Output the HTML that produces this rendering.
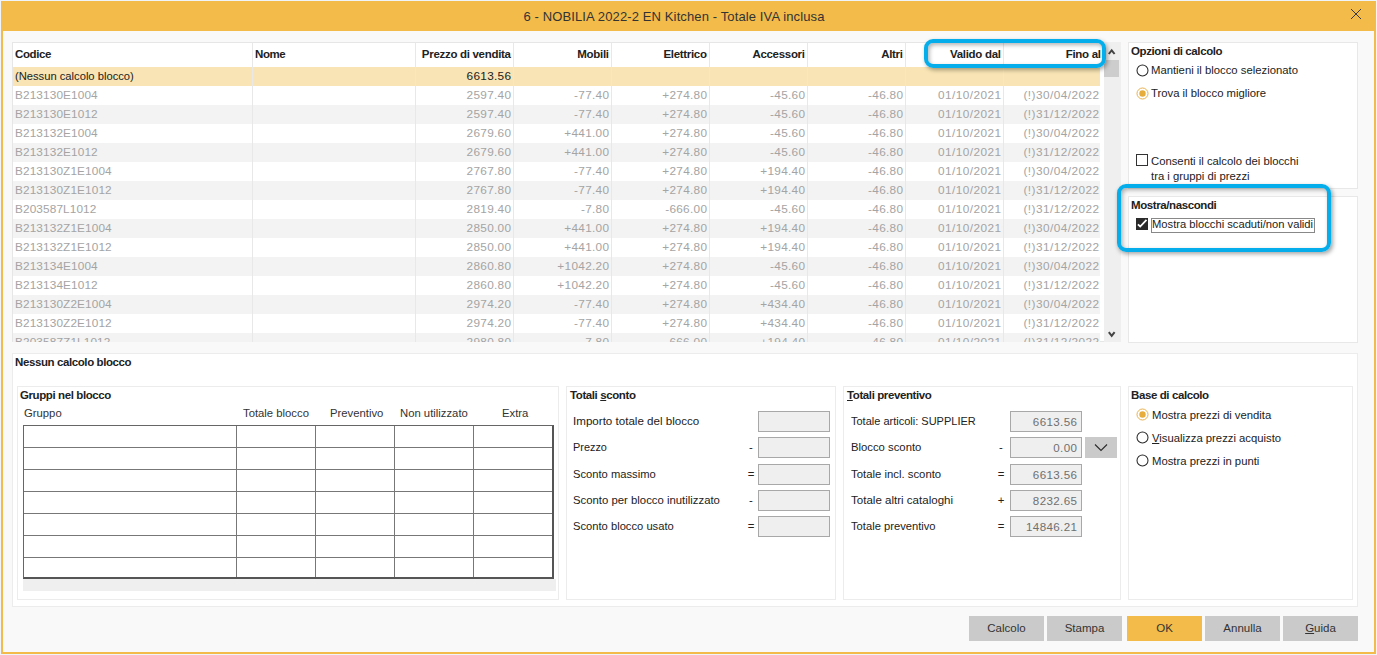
<!DOCTYPE html>
<html><head><meta charset="utf-8"><style>
html,body{margin:0;padding:0;width:1377px;height:655px;overflow:hidden;position:relative;font-family:"Liberation Sans", sans-serif;}
.b{position:absolute;}
.t{position:absolute;white-space:nowrap;}
u{text-decoration:underline;text-underline-offset:1px;}
</style></head><body>
<div class="b" style="left:0px;top:0px;width:1377px;height:655px;background:#eff3fa;"></div>
<div class="b" style="left:1px;top:1px;width:1375px;height:653px;background:#f2bb4a;"></div>
<div class="b" style="left:3px;top:31px;width:1371px;height:621px;background:#f9f9f9;"></div>
<div class="t" style="left:424.0px;width:500px;text-align:center;top:8.70px;font-size:13px;line-height:16px;color:#333;letter-spacing:0.12px;">6 - NOBILIA 2022-2 EN Kitchen - Totale IVA inclusa</div>
<svg class="b" style="left:1350px;top:8px" width="12" height="12" viewBox="0 0 12 12"><path d="M1 1L11 11M11 1L1 11" stroke="#3a3a3a" stroke-width="1" fill="none"/></svg>
<div class="b" style="left:12px;top:42px;width:1109px;height:300px;background:#fff;border:1px solid #e6e6e6;box-sizing:border-box;"></div>
<div class="b" style="left:13px;top:43px;width:1091px;height:299px;overflow:hidden;">
<div class="b" style="left:0px;top:24px;width:1087px;height:19px;background:#f8e4b4;"></div>
<div class="b" style="left:0px;top:62px;width:1087px;height:19px;background:#f3f3f3;"></div>
<div class="b" style="left:0px;top:100px;width:1087px;height:19px;background:#f3f3f3;"></div>
<div class="b" style="left:0px;top:138px;width:1087px;height:19px;background:#f3f3f3;"></div>
<div class="b" style="left:0px;top:176px;width:1087px;height:19px;background:#f3f3f3;"></div>
<div class="b" style="left:0px;top:214px;width:1087px;height:19px;background:#f3f3f3;"></div>
<div class="b" style="left:0px;top:252px;width:1087px;height:19px;background:#f3f3f3;"></div>
<div class="b" style="left:0px;top:290px;width:1087px;height:19px;background:#f3f3f3;"></div>
<div class="b" style="left:239px;top:0px;width:1px;height:300px;background:#e8e8e8;"></div>
<div class="b" style="left:402px;top:0px;width:1px;height:300px;background:#e8e8e8;"></div>
<div class="b" style="left:500px;top:0px;width:1px;height:300px;background:#e8e8e8;"></div>
<div class="b" style="left:598px;top:0px;width:1px;height:300px;background:#e8e8e8;"></div>
<div class="b" style="left:696px;top:0px;width:1px;height:300px;background:#e8e8e8;"></div>
<div class="b" style="left:794px;top:0px;width:1px;height:300px;background:#e8e8e8;"></div>
<div class="b" style="left:892px;top:0px;width:1px;height:300px;background:#e8e8e8;"></div>
<div class="b" style="left:990px;top:0px;width:1px;height:300px;background:#e8e8e8;"></div>
<div class="t" style="left:2px;top:3.20px;font-size:11.5px;line-height:16px;color:#222;font-weight:bold;letter-spacing:-0.4px;">Codice</div>
<div class="t" style="left:242px;top:3.20px;font-size:11.5px;line-height:16px;color:#222;font-weight:bold;letter-spacing:-0.4px;">Nome</div>
<div class="t" style="left:402.7px;width:95px;text-align:right;top:3.20px;font-size:11.5px;line-height:16px;color:#222;font-weight:bold;letter-spacing:-0.3px;">Prezzo di vendita</div>
<div class="t" style="left:500.70000000000005px;width:95px;text-align:right;top:3.20px;font-size:11.5px;line-height:16px;color:#222;font-weight:bold;letter-spacing:-0.3px;">Mobili</div>
<div class="t" style="left:598.7px;width:95px;text-align:right;top:3.20px;font-size:11.5px;line-height:16px;color:#222;font-weight:bold;letter-spacing:-0.3px;">Elettrico</div>
<div class="t" style="left:696.7px;width:95px;text-align:right;top:3.20px;font-size:11.5px;line-height:16px;color:#222;font-weight:bold;letter-spacing:-0.3px;">Accessori</div>
<div class="t" style="left:794.7px;width:95px;text-align:right;top:3.20px;font-size:11.5px;line-height:16px;color:#222;font-weight:bold;letter-spacing:-0.3px;">Altri</div>
<div class="t" style="left:892.7px;width:95px;text-align:right;top:3.20px;font-size:11.5px;line-height:16px;color:#222;font-weight:bold;letter-spacing:-0.3px;">Valido dal</div>
<div class="t" style="left:992.7px;width:95px;text-align:right;top:3.20px;font-size:11.5px;line-height:16px;color:#222;font-weight:bold;letter-spacing:-0.3px;">Fino al</div>
<div class="t" style="left:2px;top:25.30px;font-size:11.2px;line-height:16px;color:#222;">(Nessun calcolo blocco)</div>
<div class="t" style="left:403.3px;width:95px;text-align:right;top:25.10px;font-size:11.8px;line-height:16px;color:#222;letter-spacing:0.3px;">6613.56</div>
<div class="t" style="left:2px;top:44.10px;font-size:11.8px;line-height:16px;color:#a4a4a4;letter-spacing:0.12px;">B213130E1004</div>
<div class="t" style="left:403.3px;width:95px;text-align:right;top:44.10px;font-size:11.8px;line-height:16px;color:#a4a4a4;letter-spacing:0.3px;">2597.40</div>
<div class="t" style="left:501.29999999999995px;width:95px;text-align:right;top:44.10px;font-size:11.8px;line-height:16px;color:#a4a4a4;letter-spacing:0.3px;">-77.40</div>
<div class="t" style="left:599.3px;width:95px;text-align:right;top:44.10px;font-size:11.8px;line-height:16px;color:#a4a4a4;letter-spacing:0.3px;">+274.80</div>
<div class="t" style="left:697.3px;width:95px;text-align:right;top:44.10px;font-size:11.8px;line-height:16px;color:#a4a4a4;letter-spacing:0.3px;">-45.60</div>
<div class="t" style="left:795.3px;width:95px;text-align:right;top:44.10px;font-size:11.8px;line-height:16px;color:#a4a4a4;letter-spacing:0.3px;">-46.80</div>
<div class="t" style="left:893.45px;width:95px;text-align:right;top:44.10px;font-size:11.8px;line-height:16px;color:#a4a4a4;letter-spacing:0.45px;">01/10/2021</div>
<div class="t" style="left:991.45px;width:95px;text-align:right;top:44.10px;font-size:11.8px;line-height:16px;color:#a4a4a4;letter-spacing:0.45px;">(!)30/04/2022</div>
<div class="t" style="left:2px;top:63.10px;font-size:11.8px;line-height:16px;color:#a4a4a4;letter-spacing:0.12px;">B213130E1012</div>
<div class="t" style="left:403.3px;width:95px;text-align:right;top:63.10px;font-size:11.8px;line-height:16px;color:#a4a4a4;letter-spacing:0.3px;">2597.40</div>
<div class="t" style="left:501.29999999999995px;width:95px;text-align:right;top:63.10px;font-size:11.8px;line-height:16px;color:#a4a4a4;letter-spacing:0.3px;">-77.40</div>
<div class="t" style="left:599.3px;width:95px;text-align:right;top:63.10px;font-size:11.8px;line-height:16px;color:#a4a4a4;letter-spacing:0.3px;">+274.80</div>
<div class="t" style="left:697.3px;width:95px;text-align:right;top:63.10px;font-size:11.8px;line-height:16px;color:#a4a4a4;letter-spacing:0.3px;">-45.60</div>
<div class="t" style="left:795.3px;width:95px;text-align:right;top:63.10px;font-size:11.8px;line-height:16px;color:#a4a4a4;letter-spacing:0.3px;">-46.80</div>
<div class="t" style="left:893.45px;width:95px;text-align:right;top:63.10px;font-size:11.8px;line-height:16px;color:#a4a4a4;letter-spacing:0.45px;">01/10/2021</div>
<div class="t" style="left:991.45px;width:95px;text-align:right;top:63.10px;font-size:11.8px;line-height:16px;color:#a4a4a4;letter-spacing:0.45px;">(!)31/12/2022</div>
<div class="t" style="left:2px;top:82.10px;font-size:11.8px;line-height:16px;color:#a4a4a4;letter-spacing:0.12px;">B213132E1004</div>
<div class="t" style="left:403.3px;width:95px;text-align:right;top:82.10px;font-size:11.8px;line-height:16px;color:#a4a4a4;letter-spacing:0.3px;">2679.60</div>
<div class="t" style="left:501.29999999999995px;width:95px;text-align:right;top:82.10px;font-size:11.8px;line-height:16px;color:#a4a4a4;letter-spacing:0.3px;">+441.00</div>
<div class="t" style="left:599.3px;width:95px;text-align:right;top:82.10px;font-size:11.8px;line-height:16px;color:#a4a4a4;letter-spacing:0.3px;">+274.80</div>
<div class="t" style="left:697.3px;width:95px;text-align:right;top:82.10px;font-size:11.8px;line-height:16px;color:#a4a4a4;letter-spacing:0.3px;">-45.60</div>
<div class="t" style="left:795.3px;width:95px;text-align:right;top:82.10px;font-size:11.8px;line-height:16px;color:#a4a4a4;letter-spacing:0.3px;">-46.80</div>
<div class="t" style="left:893.45px;width:95px;text-align:right;top:82.10px;font-size:11.8px;line-height:16px;color:#a4a4a4;letter-spacing:0.45px;">01/10/2021</div>
<div class="t" style="left:991.45px;width:95px;text-align:right;top:82.10px;font-size:11.8px;line-height:16px;color:#a4a4a4;letter-spacing:0.45px;">(!)30/04/2022</div>
<div class="t" style="left:2px;top:101.10px;font-size:11.8px;line-height:16px;color:#a4a4a4;letter-spacing:0.12px;">B213132E1012</div>
<div class="t" style="left:403.3px;width:95px;text-align:right;top:101.10px;font-size:11.8px;line-height:16px;color:#a4a4a4;letter-spacing:0.3px;">2679.60</div>
<div class="t" style="left:501.29999999999995px;width:95px;text-align:right;top:101.10px;font-size:11.8px;line-height:16px;color:#a4a4a4;letter-spacing:0.3px;">+441.00</div>
<div class="t" style="left:599.3px;width:95px;text-align:right;top:101.10px;font-size:11.8px;line-height:16px;color:#a4a4a4;letter-spacing:0.3px;">+274.80</div>
<div class="t" style="left:697.3px;width:95px;text-align:right;top:101.10px;font-size:11.8px;line-height:16px;color:#a4a4a4;letter-spacing:0.3px;">-45.60</div>
<div class="t" style="left:795.3px;width:95px;text-align:right;top:101.10px;font-size:11.8px;line-height:16px;color:#a4a4a4;letter-spacing:0.3px;">-46.80</div>
<div class="t" style="left:893.45px;width:95px;text-align:right;top:101.10px;font-size:11.8px;line-height:16px;color:#a4a4a4;letter-spacing:0.45px;">01/10/2021</div>
<div class="t" style="left:991.45px;width:95px;text-align:right;top:101.10px;font-size:11.8px;line-height:16px;color:#a4a4a4;letter-spacing:0.45px;">(!)31/12/2022</div>
<div class="t" style="left:2px;top:120.10px;font-size:11.8px;line-height:16px;color:#a4a4a4;letter-spacing:0.12px;">B213130Z1E1004</div>
<div class="t" style="left:403.3px;width:95px;text-align:right;top:120.10px;font-size:11.8px;line-height:16px;color:#a4a4a4;letter-spacing:0.3px;">2767.80</div>
<div class="t" style="left:501.29999999999995px;width:95px;text-align:right;top:120.10px;font-size:11.8px;line-height:16px;color:#a4a4a4;letter-spacing:0.3px;">-77.40</div>
<div class="t" style="left:599.3px;width:95px;text-align:right;top:120.10px;font-size:11.8px;line-height:16px;color:#a4a4a4;letter-spacing:0.3px;">+274.80</div>
<div class="t" style="left:697.3px;width:95px;text-align:right;top:120.10px;font-size:11.8px;line-height:16px;color:#a4a4a4;letter-spacing:0.3px;">+194.40</div>
<div class="t" style="left:795.3px;width:95px;text-align:right;top:120.10px;font-size:11.8px;line-height:16px;color:#a4a4a4;letter-spacing:0.3px;">-46.80</div>
<div class="t" style="left:893.45px;width:95px;text-align:right;top:120.10px;font-size:11.8px;line-height:16px;color:#a4a4a4;letter-spacing:0.45px;">01/10/2021</div>
<div class="t" style="left:991.45px;width:95px;text-align:right;top:120.10px;font-size:11.8px;line-height:16px;color:#a4a4a4;letter-spacing:0.45px;">(!)30/04/2022</div>
<div class="t" style="left:2px;top:139.10px;font-size:11.8px;line-height:16px;color:#a4a4a4;letter-spacing:0.12px;">B213130Z1E1012</div>
<div class="t" style="left:403.3px;width:95px;text-align:right;top:139.10px;font-size:11.8px;line-height:16px;color:#a4a4a4;letter-spacing:0.3px;">2767.80</div>
<div class="t" style="left:501.29999999999995px;width:95px;text-align:right;top:139.10px;font-size:11.8px;line-height:16px;color:#a4a4a4;letter-spacing:0.3px;">-77.40</div>
<div class="t" style="left:599.3px;width:95px;text-align:right;top:139.10px;font-size:11.8px;line-height:16px;color:#a4a4a4;letter-spacing:0.3px;">+274.80</div>
<div class="t" style="left:697.3px;width:95px;text-align:right;top:139.10px;font-size:11.8px;line-height:16px;color:#a4a4a4;letter-spacing:0.3px;">+194.40</div>
<div class="t" style="left:795.3px;width:95px;text-align:right;top:139.10px;font-size:11.8px;line-height:16px;color:#a4a4a4;letter-spacing:0.3px;">-46.80</div>
<div class="t" style="left:893.45px;width:95px;text-align:right;top:139.10px;font-size:11.8px;line-height:16px;color:#a4a4a4;letter-spacing:0.45px;">01/10/2021</div>
<div class="t" style="left:991.45px;width:95px;text-align:right;top:139.10px;font-size:11.8px;line-height:16px;color:#a4a4a4;letter-spacing:0.45px;">(!)31/12/2022</div>
<div class="t" style="left:2px;top:158.10px;font-size:11.8px;line-height:16px;color:#a4a4a4;letter-spacing:0.12px;">B203587L1012</div>
<div class="t" style="left:403.3px;width:95px;text-align:right;top:158.10px;font-size:11.8px;line-height:16px;color:#a4a4a4;letter-spacing:0.3px;">2819.40</div>
<div class="t" style="left:501.29999999999995px;width:95px;text-align:right;top:158.10px;font-size:11.8px;line-height:16px;color:#a4a4a4;letter-spacing:0.3px;">-7.80</div>
<div class="t" style="left:599.3px;width:95px;text-align:right;top:158.10px;font-size:11.8px;line-height:16px;color:#a4a4a4;letter-spacing:0.3px;">-666.00</div>
<div class="t" style="left:697.3px;width:95px;text-align:right;top:158.10px;font-size:11.8px;line-height:16px;color:#a4a4a4;letter-spacing:0.3px;">-45.60</div>
<div class="t" style="left:795.3px;width:95px;text-align:right;top:158.10px;font-size:11.8px;line-height:16px;color:#a4a4a4;letter-spacing:0.3px;">-46.80</div>
<div class="t" style="left:893.45px;width:95px;text-align:right;top:158.10px;font-size:11.8px;line-height:16px;color:#a4a4a4;letter-spacing:0.45px;">01/10/2021</div>
<div class="t" style="left:991.45px;width:95px;text-align:right;top:158.10px;font-size:11.8px;line-height:16px;color:#a4a4a4;letter-spacing:0.45px;">(!)31/12/2022</div>
<div class="t" style="left:2px;top:177.10px;font-size:11.8px;line-height:16px;color:#a4a4a4;letter-spacing:0.12px;">B213132Z1E1004</div>
<div class="t" style="left:403.3px;width:95px;text-align:right;top:177.10px;font-size:11.8px;line-height:16px;color:#a4a4a4;letter-spacing:0.3px;">2850.00</div>
<div class="t" style="left:501.29999999999995px;width:95px;text-align:right;top:177.10px;font-size:11.8px;line-height:16px;color:#a4a4a4;letter-spacing:0.3px;">+441.00</div>
<div class="t" style="left:599.3px;width:95px;text-align:right;top:177.10px;font-size:11.8px;line-height:16px;color:#a4a4a4;letter-spacing:0.3px;">+274.80</div>
<div class="t" style="left:697.3px;width:95px;text-align:right;top:177.10px;font-size:11.8px;line-height:16px;color:#a4a4a4;letter-spacing:0.3px;">+194.40</div>
<div class="t" style="left:795.3px;width:95px;text-align:right;top:177.10px;font-size:11.8px;line-height:16px;color:#a4a4a4;letter-spacing:0.3px;">-46.80</div>
<div class="t" style="left:893.45px;width:95px;text-align:right;top:177.10px;font-size:11.8px;line-height:16px;color:#a4a4a4;letter-spacing:0.45px;">01/10/2021</div>
<div class="t" style="left:991.45px;width:95px;text-align:right;top:177.10px;font-size:11.8px;line-height:16px;color:#a4a4a4;letter-spacing:0.45px;">(!)30/04/2022</div>
<div class="t" style="left:2px;top:196.10px;font-size:11.8px;line-height:16px;color:#a4a4a4;letter-spacing:0.12px;">B213132Z1E1012</div>
<div class="t" style="left:403.3px;width:95px;text-align:right;top:196.10px;font-size:11.8px;line-height:16px;color:#a4a4a4;letter-spacing:0.3px;">2850.00</div>
<div class="t" style="left:501.29999999999995px;width:95px;text-align:right;top:196.10px;font-size:11.8px;line-height:16px;color:#a4a4a4;letter-spacing:0.3px;">+441.00</div>
<div class="t" style="left:599.3px;width:95px;text-align:right;top:196.10px;font-size:11.8px;line-height:16px;color:#a4a4a4;letter-spacing:0.3px;">+274.80</div>
<div class="t" style="left:697.3px;width:95px;text-align:right;top:196.10px;font-size:11.8px;line-height:16px;color:#a4a4a4;letter-spacing:0.3px;">+194.40</div>
<div class="t" style="left:795.3px;width:95px;text-align:right;top:196.10px;font-size:11.8px;line-height:16px;color:#a4a4a4;letter-spacing:0.3px;">-46.80</div>
<div class="t" style="left:893.45px;width:95px;text-align:right;top:196.10px;font-size:11.8px;line-height:16px;color:#a4a4a4;letter-spacing:0.45px;">01/10/2021</div>
<div class="t" style="left:991.45px;width:95px;text-align:right;top:196.10px;font-size:11.8px;line-height:16px;color:#a4a4a4;letter-spacing:0.45px;">(!)31/12/2022</div>
<div class="t" style="left:2px;top:215.10px;font-size:11.8px;line-height:16px;color:#a4a4a4;letter-spacing:0.12px;">B213134E1004</div>
<div class="t" style="left:403.3px;width:95px;text-align:right;top:215.10px;font-size:11.8px;line-height:16px;color:#a4a4a4;letter-spacing:0.3px;">2860.80</div>
<div class="t" style="left:501.29999999999995px;width:95px;text-align:right;top:215.10px;font-size:11.8px;line-height:16px;color:#a4a4a4;letter-spacing:0.3px;">+1042.20</div>
<div class="t" style="left:599.3px;width:95px;text-align:right;top:215.10px;font-size:11.8px;line-height:16px;color:#a4a4a4;letter-spacing:0.3px;">+274.80</div>
<div class="t" style="left:697.3px;width:95px;text-align:right;top:215.10px;font-size:11.8px;line-height:16px;color:#a4a4a4;letter-spacing:0.3px;">-45.60</div>
<div class="t" style="left:795.3px;width:95px;text-align:right;top:215.10px;font-size:11.8px;line-height:16px;color:#a4a4a4;letter-spacing:0.3px;">-46.80</div>
<div class="t" style="left:893.45px;width:95px;text-align:right;top:215.10px;font-size:11.8px;line-height:16px;color:#a4a4a4;letter-spacing:0.45px;">01/10/2021</div>
<div class="t" style="left:991.45px;width:95px;text-align:right;top:215.10px;font-size:11.8px;line-height:16px;color:#a4a4a4;letter-spacing:0.45px;">(!)30/04/2022</div>
<div class="t" style="left:2px;top:234.10px;font-size:11.8px;line-height:16px;color:#a4a4a4;letter-spacing:0.12px;">B213134E1012</div>
<div class="t" style="left:403.3px;width:95px;text-align:right;top:234.10px;font-size:11.8px;line-height:16px;color:#a4a4a4;letter-spacing:0.3px;">2860.80</div>
<div class="t" style="left:501.29999999999995px;width:95px;text-align:right;top:234.10px;font-size:11.8px;line-height:16px;color:#a4a4a4;letter-spacing:0.3px;">+1042.20</div>
<div class="t" style="left:599.3px;width:95px;text-align:right;top:234.10px;font-size:11.8px;line-height:16px;color:#a4a4a4;letter-spacing:0.3px;">+274.80</div>
<div class="t" style="left:697.3px;width:95px;text-align:right;top:234.10px;font-size:11.8px;line-height:16px;color:#a4a4a4;letter-spacing:0.3px;">-45.60</div>
<div class="t" style="left:795.3px;width:95px;text-align:right;top:234.10px;font-size:11.8px;line-height:16px;color:#a4a4a4;letter-spacing:0.3px;">-46.80</div>
<div class="t" style="left:893.45px;width:95px;text-align:right;top:234.10px;font-size:11.8px;line-height:16px;color:#a4a4a4;letter-spacing:0.45px;">01/10/2021</div>
<div class="t" style="left:991.45px;width:95px;text-align:right;top:234.10px;font-size:11.8px;line-height:16px;color:#a4a4a4;letter-spacing:0.45px;">(!)31/12/2022</div>
<div class="t" style="left:2px;top:253.10px;font-size:11.8px;line-height:16px;color:#a4a4a4;letter-spacing:0.12px;">B213130Z2E1004</div>
<div class="t" style="left:403.3px;width:95px;text-align:right;top:253.10px;font-size:11.8px;line-height:16px;color:#a4a4a4;letter-spacing:0.3px;">2974.20</div>
<div class="t" style="left:501.29999999999995px;width:95px;text-align:right;top:253.10px;font-size:11.8px;line-height:16px;color:#a4a4a4;letter-spacing:0.3px;">-77.40</div>
<div class="t" style="left:599.3px;width:95px;text-align:right;top:253.10px;font-size:11.8px;line-height:16px;color:#a4a4a4;letter-spacing:0.3px;">+274.80</div>
<div class="t" style="left:697.3px;width:95px;text-align:right;top:253.10px;font-size:11.8px;line-height:16px;color:#a4a4a4;letter-spacing:0.3px;">+434.40</div>
<div class="t" style="left:795.3px;width:95px;text-align:right;top:253.10px;font-size:11.8px;line-height:16px;color:#a4a4a4;letter-spacing:0.3px;">-46.80</div>
<div class="t" style="left:893.45px;width:95px;text-align:right;top:253.10px;font-size:11.8px;line-height:16px;color:#a4a4a4;letter-spacing:0.45px;">01/10/2021</div>
<div class="t" style="left:991.45px;width:95px;text-align:right;top:253.10px;font-size:11.8px;line-height:16px;color:#a4a4a4;letter-spacing:0.45px;">(!)30/04/2022</div>
<div class="t" style="left:2px;top:272.10px;font-size:11.8px;line-height:16px;color:#a4a4a4;letter-spacing:0.12px;">B213130Z2E1012</div>
<div class="t" style="left:403.3px;width:95px;text-align:right;top:272.10px;font-size:11.8px;line-height:16px;color:#a4a4a4;letter-spacing:0.3px;">2974.20</div>
<div class="t" style="left:501.29999999999995px;width:95px;text-align:right;top:272.10px;font-size:11.8px;line-height:16px;color:#a4a4a4;letter-spacing:0.3px;">-77.40</div>
<div class="t" style="left:599.3px;width:95px;text-align:right;top:272.10px;font-size:11.8px;line-height:16px;color:#a4a4a4;letter-spacing:0.3px;">+274.80</div>
<div class="t" style="left:697.3px;width:95px;text-align:right;top:272.10px;font-size:11.8px;line-height:16px;color:#a4a4a4;letter-spacing:0.3px;">+434.40</div>
<div class="t" style="left:795.3px;width:95px;text-align:right;top:272.10px;font-size:11.8px;line-height:16px;color:#a4a4a4;letter-spacing:0.3px;">-46.80</div>
<div class="t" style="left:893.45px;width:95px;text-align:right;top:272.10px;font-size:11.8px;line-height:16px;color:#a4a4a4;letter-spacing:0.45px;">01/10/2021</div>
<div class="t" style="left:991.45px;width:95px;text-align:right;top:272.10px;font-size:11.8px;line-height:16px;color:#a4a4a4;letter-spacing:0.45px;">(!)31/12/2022</div>
<div class="t" style="left:2px;top:291.10px;font-size:11.8px;line-height:16px;color:#a4a4a4;letter-spacing:0.12px;">B203587Z1L1012</div>
<div class="t" style="left:403.3px;width:95px;text-align:right;top:291.10px;font-size:11.8px;line-height:16px;color:#a4a4a4;letter-spacing:0.3px;">2980.80</div>
<div class="t" style="left:501.29999999999995px;width:95px;text-align:right;top:291.10px;font-size:11.8px;line-height:16px;color:#a4a4a4;letter-spacing:0.3px;">-7.80</div>
<div class="t" style="left:599.3px;width:95px;text-align:right;top:291.10px;font-size:11.8px;line-height:16px;color:#a4a4a4;letter-spacing:0.3px;">-666.00</div>
<div class="t" style="left:697.3px;width:95px;text-align:right;top:291.10px;font-size:11.8px;line-height:16px;color:#a4a4a4;letter-spacing:0.3px;">+194.40</div>
<div class="t" style="left:795.3px;width:95px;text-align:right;top:291.10px;font-size:11.8px;line-height:16px;color:#a4a4a4;letter-spacing:0.3px;">-46.80</div>
<div class="t" style="left:893.45px;width:95px;text-align:right;top:291.10px;font-size:11.8px;line-height:16px;color:#a4a4a4;letter-spacing:0.45px;">01/10/2021</div>
<div class="t" style="left:991.45px;width:95px;text-align:right;top:291.10px;font-size:11.8px;line-height:16px;color:#a4a4a4;letter-spacing:0.45px;">(!)31/12/2022</div>
</div>
<div class="b" style="left:1104px;top:42px;width:17px;height:300px;background:#efefef;"></div>
<div class="b" style="left:1104px;top:60px;width:15px;height:17px;background:#cdcdcd;"></div>
<svg class="b" style="left:1106px;top:47px" width="11" height="10" viewBox="0 0 11 10"><path d="M2.8 7L5.7 3.3L8.6 7" stroke="#444" stroke-width="2" fill="none"/></svg>
<svg class="b" style="left:1106px;top:328.5px" width="11" height="10" viewBox="0 0 11 10"><path d="M2.8 3.2L5.7 6.9L8.6 3.2" stroke="#444" stroke-width="2" fill="none"/></svg>
<div class="b" style="left:1128px;top:42px;width:230px;height:147px;background:#fff;border:1px solid #e8e8e8;box-sizing:border-box;"></div>
<div class="t" style="left:1131px;top:43.20px;font-size:11.5px;line-height:16px;color:#222;font-weight:bold;letter-spacing:-0.4px;">Opzioni di calcolo</div>
<svg class="b" style="left:1135.7px;top:63.5px" width="13" height="13" viewBox="0 0 13 13"><circle cx="6.5" cy="6.5" r="5.5" fill="#fff" stroke="#2a2a2a" stroke-width="1.05"/></svg>
<div class="t" style="left:1151px;top:62.27px;font-size:11.3px;line-height:16px;color:#222;">Mantieni il blocco selezionato</div>
<svg class="b" style="left:1135.7px;top:86.5px" width="13" height="13" viewBox="0 0 13 13"><circle cx="6.5" cy="6.5" r="5.5" fill="#fff" stroke="#eab14a" stroke-width="1"/><circle cx="6.5" cy="6.5" r="3.2" fill="#e6ad3c"/></svg>
<div class="t" style="left:1151px;top:85.27px;font-size:11.3px;line-height:16px;color:#222;">Trova il blocco migliore</div>
<div class="b" style="left:1136px;top:154px;width:12px;height:12px;border:1px solid #333;background:#fff;box-sizing:border-box;"></div>
<div class="t" style="left:1151px;top:153.27px;font-size:11.3px;line-height:16px;color:#222;">Consenti il calcolo dei blocchi</div>
<div class="t" style="left:1151px;top:168.27px;font-size:11.3px;line-height:16px;color:#222;">tra i gruppi di prezzi</div>
<div class="b" style="left:1128px;top:196px;width:230px;height:147px;background:#fff;border:1px solid #e8e8e8;box-sizing:border-box;"></div>
<div class="t" style="left:1131px;top:197.20px;font-size:11.5px;line-height:16px;color:#222;font-weight:bold;letter-spacing:-0.4px;">Mostra/nascondi</div>
<div class="b" style="left:1136px;top:218px;width:12px;height:12px;background:#2b2b2b;"></div>
<svg class="b" style="left:1136px;top:218px" width="12" height="12" viewBox="0 0 12 12"><path d="M1.9 6.4L4.2 8.5L10.5 1.8" stroke="#fff" stroke-width="1.8" fill="none"/></svg>
<div class="b" style="left:1151px;top:218px;width:164px;height:15px;border:1px solid #888;box-sizing:border-box;"></div>
<div class="t" style="left:1152px;top:216.30px;font-size:11.2px;line-height:16px;color:#222;">Mostra blocchi scaduti/non validi</div>
<div class="b" style="left:12px;top:353px;width:1346px;height:254px;background:#fff;border:1px solid #ececec;box-sizing:border-box;"></div>
<div class="t" style="left:15px;top:354.20px;font-size:11.5px;line-height:16px;color:#222;font-weight:bold;letter-spacing:-0.4px;">Nessun calcolo blocco</div>
<div class="b" style="left:17px;top:386px;width:542px;height:214px;background:#fff;border:1px solid #ececec;box-sizing:border-box;"></div>
<div class="t" style="left:20px;top:387.20px;font-size:11.5px;line-height:16px;color:#222;font-weight:bold;letter-spacing:-0.4px;">Gruppi nel blocco</div>
<div class="t" style="left:24px;top:405.27px;font-size:11.3px;line-height:16px;color:#333;">Gruppo</div>
<div class="t" style="left:243px;top:405.27px;font-size:11.3px;line-height:16px;color:#333;">Totale blocco</div>
<div class="t" style="left:330px;top:405.27px;font-size:11.3px;line-height:16px;color:#333;">Preventivo</div>
<div class="t" style="left:400px;top:405.27px;font-size:11.3px;line-height:16px;color:#333;">Non utilizzato</div>
<div class="t" style="left:502px;top:405.27px;font-size:11.3px;line-height:16px;color:#333;">Extra</div>
<div class="b" style="left:23px;top:425px;width:531px;height:154px;border:1px solid #666;border-right:2px solid #555;border-bottom:2px solid #555;box-sizing:border-box;background:#fff;"></div>
<div class="b" style="left:24px;top:447px;width:528px;height:1px;background:#777;"></div>
<div class="b" style="left:24px;top:469px;width:528px;height:1px;background:#777;"></div>
<div class="b" style="left:24px;top:491px;width:528px;height:1px;background:#777;"></div>
<div class="b" style="left:24px;top:513px;width:528px;height:1px;background:#777;"></div>
<div class="b" style="left:24px;top:535px;width:528px;height:1px;background:#777;"></div>
<div class="b" style="left:24px;top:557px;width:528px;height:1px;background:#777;"></div>
<div class="b" style="left:236px;top:426px;width:1px;height:151px;background:#777;"></div>
<div class="b" style="left:315px;top:426px;width:1px;height:151px;background:#777;"></div>
<div class="b" style="left:394px;top:426px;width:1px;height:151px;background:#777;"></div>
<div class="b" style="left:473px;top:426px;width:1px;height:151px;background:#777;"></div>
<div class="b" style="left:23px;top:579px;width:533px;height:12px;background:#efefef;"></div>
<div class="b" style="left:566px;top:386px;width:270px;height:214px;background:#fff;border:1px solid #ececec;box-sizing:border-box;"></div>
<div class="t" style="left:570px;top:387.20px;font-size:11.5px;line-height:16px;color:#222;font-weight:bold;letter-spacing:-0.4px;">Totali <u>s</u>conto</div>
<div class="t" style="left:573px;top:412.77px;font-size:11.6px;line-height:16px;color:#222;">Importo totale del blocco</div>
<div class="b" style="left:758px;top:411px;width:72px;height:21px;background:#efefef;border:1px solid #a8a8a8;box-sizing:border-box;"></div>
<div class="t" style="left:573px;top:439.00px;font-size:10.9px;line-height:16px;color:#222;">Prezzo</div>
<div class="t" style="left:746.0px;width:10px;text-align:center;top:438.83px;font-size:11.4px;line-height:16px;color:#222;">-</div>
<div class="b" style="left:758px;top:437px;width:72px;height:21px;background:#efefef;border:1px solid #a8a8a8;box-sizing:border-box;"></div>
<div class="t" style="left:573px;top:465.90px;font-size:11.2px;line-height:16px;color:#222;">Sconto massimo</div>
<div class="t" style="left:746.0px;width:10px;text-align:center;top:465.83px;font-size:11.4px;line-height:16px;color:#222;">=</div>
<div class="b" style="left:758px;top:464px;width:72px;height:21px;background:#efefef;border:1px solid #a8a8a8;box-sizing:border-box;"></div>
<div class="t" style="left:573px;top:491.85px;font-size:11.35px;line-height:16px;color:#222;">Sconto per blocco inutilizzato</div>
<div class="t" style="left:746.0px;width:10px;text-align:center;top:491.83px;font-size:11.4px;line-height:16px;color:#222;">-</div>
<div class="b" style="left:758px;top:490px;width:72px;height:21px;background:#efefef;border:1px solid #a8a8a8;box-sizing:border-box;"></div>
<div class="t" style="left:573px;top:517.90px;font-size:11.2px;line-height:16px;color:#222;">Sconto blocco usato</div>
<div class="t" style="left:746.0px;width:10px;text-align:center;top:517.83px;font-size:11.4px;line-height:16px;color:#222;">=</div>
<div class="b" style="left:758px;top:516px;width:72px;height:21px;background:#efefef;border:1px solid #a8a8a8;box-sizing:border-box;"></div>
<div class="b" style="left:843px;top:386px;width:278px;height:214px;background:#fff;border:1px solid #ececec;box-sizing:border-box;"></div>
<div class="t" style="left:847px;top:387.20px;font-size:11.5px;line-height:16px;color:#222;font-weight:bold;letter-spacing:-0.4px;"><u>T</u>otali preventivo</div>
<div class="t" style="left:851px;top:412.96px;font-size:11.0px;line-height:16px;color:#222;">Totale articoli: SUPPLIER</div>
<div class="b" style="left:1010px;top:411px;width:72px;height:21px;background:#efefef;border:1px solid #a8a8a8;box-sizing:border-box;"></div>
<div class="t" style="left:1012.4000000000001px;width:65px;text-align:right;top:413.67px;font-size:11.6px;line-height:16px;color:#707070;letter-spacing:0.38px;">6613.56</div>
<div class="t" style="left:851px;top:438.87px;font-size:11.3px;line-height:16px;color:#222;">Blocco sconto</div>
<div class="t" style="left:996.0px;width:10px;text-align:center;top:438.83px;font-size:11.4px;line-height:16px;color:#222;">-</div>
<div class="b" style="left:1010px;top:437px;width:72px;height:21px;background:#efefef;border:1px solid #a8a8a8;box-sizing:border-box;"></div>
<div class="t" style="left:1012.4000000000001px;width:65px;text-align:right;top:439.67px;font-size:11.6px;line-height:16px;color:#707070;letter-spacing:0.38px;">0.00</div>
<div class="t" style="left:851px;top:465.85px;font-size:11.35px;line-height:16px;color:#222;">Totale incl. sconto</div>
<div class="t" style="left:996.0px;width:10px;text-align:center;top:465.83px;font-size:11.4px;line-height:16px;color:#222;">=</div>
<div class="b" style="left:1010px;top:464px;width:72px;height:21px;background:#efefef;border:1px solid #a8a8a8;box-sizing:border-box;"></div>
<div class="t" style="left:1012.4000000000001px;width:65px;text-align:right;top:466.67px;font-size:11.6px;line-height:16px;color:#707070;letter-spacing:0.38px;">6613.56</div>
<div class="t" style="left:851px;top:491.78px;font-size:11.55px;line-height:16px;color:#222;">Totale altri cataloghi</div>
<div class="t" style="left:996.0px;width:10px;text-align:center;top:491.83px;font-size:11.4px;line-height:16px;color:#222;">+</div>
<div class="b" style="left:1010px;top:490px;width:72px;height:21px;background:#efefef;border:1px solid #a8a8a8;box-sizing:border-box;"></div>
<div class="t" style="left:1012.4000000000001px;width:65px;text-align:right;top:492.67px;font-size:11.6px;line-height:16px;color:#707070;letter-spacing:0.38px;">8232.65</div>
<div class="t" style="left:851px;top:517.90px;font-size:11.2px;line-height:16px;color:#222;">Totale preventivo</div>
<div class="t" style="left:996.0px;width:10px;text-align:center;top:517.83px;font-size:11.4px;line-height:16px;color:#222;">=</div>
<div class="b" style="left:1010px;top:516px;width:72px;height:21px;background:#efefef;border:1px solid #a8a8a8;box-sizing:border-box;"></div>
<div class="t" style="left:1012.4000000000001px;width:65px;text-align:right;top:518.67px;font-size:11.6px;line-height:16px;color:#707070;letter-spacing:0.38px;">14846.21</div>
<div class="b" style="left:1085px;top:437px;width:32px;height:21px;background:#cacaca;"></div>
<svg class="b" style="left:1093px;top:441px" width="16" height="12" viewBox="0 0 16 12"><path d="M2 3.5L8 9.5L14 3.5" stroke="#2a2a2a" stroke-width="1.1" fill="none"/></svg>
<div class="b" style="left:1128px;top:386px;width:225px;height:214px;background:#fff;border:1px solid #ececec;box-sizing:border-box;"></div>
<div class="t" style="left:1131px;top:387.20px;font-size:11.5px;line-height:16px;color:#222;font-weight:bold;letter-spacing:-0.4px;">Base di calcolo</div>
<svg class="b" style="left:1136.2px;top:408.3px" width="13" height="13" viewBox="0 0 13 13"><circle cx="6.5" cy="6.5" r="5.5" fill="#fff" stroke="#eab14a" stroke-width="1"/><circle cx="6.5" cy="6.5" r="3.2" fill="#e6ad3c"/></svg>
<div class="t" style="left:1152px;top:407.27px;font-size:11.3px;line-height:16px;color:#222;">Mostra prezzi di vendita</div>
<svg class="b" style="left:1136.2px;top:431.3px" width="13" height="13" viewBox="0 0 13 13"><circle cx="6.5" cy="6.5" r="5.5" fill="#fff" stroke="#2a2a2a" stroke-width="1.05"/></svg>
<div class="t" style="left:1152px;top:430.27px;font-size:11.3px;line-height:16px;color:#222;"><u>V</u>isualizza prezzi acquisto</div>
<svg class="b" style="left:1136.2px;top:454.3px" width="13" height="13" viewBox="0 0 13 13"><circle cx="6.5" cy="6.5" r="5.5" fill="#fff" stroke="#2a2a2a" stroke-width="1.05"/></svg>
<div class="t" style="left:1152px;top:453.27px;font-size:11.3px;line-height:16px;color:#222;">Mostra prezzi in punti</div>
<div class="b" style="left:969px;top:616px;width:75px;height:25px;background:#cacaca;"></div>
<div class="t" style="left:969.0px;width:75px;text-align:center;top:620.20px;font-size:11.5px;line-height:16px;color:#333;">Calcolo</div>
<div class="b" style="left:1047px;top:616px;width:75px;height:25px;background:#cacaca;"></div>
<div class="t" style="left:1047.0px;width:75px;text-align:center;top:620.20px;font-size:11.5px;line-height:16px;color:#333;">Stampa</div>
<div class="b" style="left:1127px;top:616px;width:75px;height:25px;background:#f2bb4a;"></div>
<div class="t" style="left:1127.0px;width:75px;text-align:center;top:620.20px;font-size:11.5px;line-height:16px;color:#333;">OK</div>
<div class="b" style="left:1205px;top:616px;width:75px;height:25px;background:#cacaca;"></div>
<div class="t" style="left:1205.0px;width:75px;text-align:center;top:620.20px;font-size:11.5px;line-height:16px;color:#333;">Annulla</div>
<div class="b" style="left:1283px;top:616px;width:75px;height:25px;background:#cacaca;"></div>
<div class="t" style="left:1283.0px;width:75px;text-align:center;top:620.20px;font-size:11.5px;line-height:16px;color:#333;"><u>G</u>uida</div>
<div class="b" style="left:924px;top:39px;width:182px;height:29px;border:4.5px solid #05aeea;border-radius:9px;box-sizing:border-box;box-shadow:1.5px 2px 4px rgba(0,0,0,0.35), inset 1.5px 2px 4px rgba(0,0,0,0.3);"></div>
<div class="b" style="left:1117px;top:184px;width:214px;height:68px;border:4.5px solid #05aeea;border-radius:9px;box-sizing:border-box;box-shadow:1.5px 2px 4px rgba(0,0,0,0.35), inset 1.5px 2px 4px rgba(0,0,0,0.3);"></div>
</body></html>
